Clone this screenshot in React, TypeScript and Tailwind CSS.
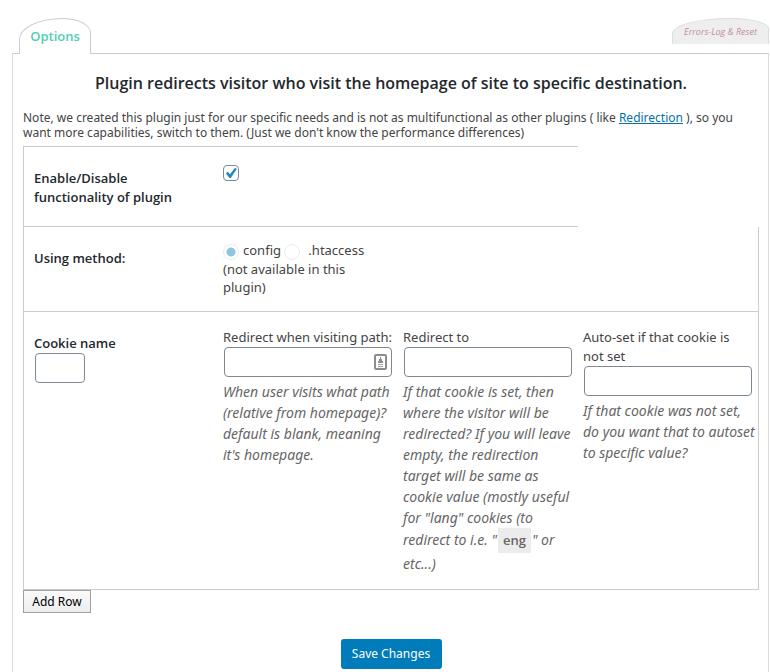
import { useState } from "react";
import type { ReactNode } from "react";

const fieldClass =
  "block h-[30px] rounded border border-[#7e8993] bg-white px-2 text-sm text-[#32373c] outline-none focus:border-[#007cba]";

const headClass =
  "border-b border-l border-[#ccc] px-[10px] pt-[22px] font-['Open_Sans',sans-serif] leading-[19px] font-semibold text-[#23282d]";

function Hint({ children }: { children: ReactNode }) {
  return <p className="mt-[4px] text-[14px] leading-[21px] text-[#666] italic">{children}</p>;
}

function AutofillIcon() {
  return (
    <svg className="pointer-events-none absolute top-[7px] right-[5px]" width="13" height="16" viewBox="0 0 13 16" aria-hidden="true">
      <rect x="1" y="1" width="11" height="14" rx="1" fill="#fff" stroke="#8c8c8c" strokeWidth="2" />
      <path d="M6 3h1v2h1v2h1v2H4V7h1V5h1z" fill="#8c8c8c" />
      <path d="M4 10h5v1H4zM4 12h5v1H4z" fill="#a5a5a5" />
    </svg>
  );
}

export default function App() {
  const [enabled, setEnabled] = useState(true);

  return (
    <div className="flex min-h-screen flex-col bg-white pt-[18px] pr-px pl-3 font-['Noto_Sans','Open_Sans',sans-serif] text-[13px] text-[#444]">
      <nav className="flex items-start justify-between pl-[7px] font-['Open_Sans',sans-serif]">
        <a
          href="#options"
          className="relative z-10 -mb-px flex h-9 w-[72px] items-center justify-center rounded-tl-[60%] rounded-tr-[40%] border border-b-0 border-[#ccc] bg-white text-[13px] font-semibold text-[#4fcfb4]"
        >
          Options
        </a>
        <a
          href="#errors-log"
          className="flex h-[26px] w-[97px] items-center justify-center rounded-tl-[60%] rounded-tr-[40%] border border-b-0 border-[#ddd] bg-[#eee] text-[9px] font-medium whitespace-nowrap text-[#c48d9b] italic"
        >
          Errors-Log &amp; Reset
        </a>
      </nav>

      <main className="flex-1 border border-b-0 border-[#ddd] border-t-[#ccc] pr-[9px] pb-[2px] pl-[10px]">
        <h1 className="mt-[17px] text-center font-['Open_Sans',sans-serif] text-[16px] leading-6 font-semibold text-[#23282d]">
          Plugin redirects visitor who visit the homepage of site to specific destination.
        </h1>
        <p className="mt-[15px] text-[12px] leading-[15px]">
          Note, we created this plugin just for our specific needs and is not as multifunctional as other plugins ( like{" "}
          <a href="#redirection" className="text-[#0073aa] underline">
            Redirection
          </a>{" "}
          ), so you want more capabilities, switch to them. (Just we don't know the performance differences)
        </p>

        <form onSubmit={(e) => e.preventDefault()}>
          <table className="mt-[6px] w-full table-fixed border-separate border-spacing-0 text-left">
            <colgroup>
              <col className="w-[190px]" />
              <col className="w-[180px]" />
              <col className="w-[185px]" />
              <col />
            </colgroup>
            <tbody>
              <tr className="h-[81px] align-top">
                <th className={`${headClass} border-t`}>
                  <label htmlFor="enabled">
                    Enable/Disable
                    <br />
                    functionality of plugin
                  </label>
                </th>
                <td colSpan={2} className="border-y border-[#ccc] px-[10px] pt-[18px]">
                  <span className="relative block size-4">
                    <input
                      id="enabled"
                      type="checkbox"
                      checked={enabled}
                      onChange={(e) => setEnabled(e.target.checked)}
                      className="block size-4 appearance-none rounded border border-[#7e8993] bg-white"
                    />
                    {enabled && (
                      <svg className="pointer-events-none absolute inset-0" width="16" height="16" viewBox="0 0 16 16" aria-hidden="true">
                        <path d="M2.8 8.2 4.8 6.8l2.2 2.4 5-6.4 1.8 1.2L7.8 13H6.4z" fill="#1e8cbe" />
                      </svg>
                    )}
                  </span>
                </td>
                <td />
              </tr>

              <tr className="h-[85px] align-top">
                <th className={headClass}>Using method:</th>
                <td className="border-b border-[#ccc] px-[10px] pt-[14px] leading-[18px]">
                  <input
                    id="method-config"
                    type="radio"
                    name="method"
                    defaultChecked
                    disabled
                    className="mr-1 inline-block size-4 appearance-none rounded-full border border-[#ececec] bg-white bg-[radial-gradient(circle,#8ec5df_4px,transparent_5px)] align-middle"
                  />
                  <label htmlFor="method-config">config</label>{" "}
                  <input
                    id="method-htaccess"
                    type="radio"
                    name="method"
                    disabled
                    className="mr-2 inline-block size-4 appearance-none rounded-full border border-[#ececec] bg-white align-middle"
                  />
                  <label htmlFor="method-htaccess">.htaccess (not available in this plugin)</label>
                </td>
                <td className="border-b border-[#ccc]" />
                <td className="border-r border-b border-[#ccc]" />
              </tr>

              <tr className="h-[278px] align-top">
                <th className={headClass}>
                  <label htmlFor="cookie">Cookie name</label>
                  <input id="cookie" type="text" className={`${fieldClass} ml-px w-[50px]`} />
                </th>
                <td className="border-b border-[#ccc] pt-[16px] pl-[10px] leading-[19px]">
                  <label htmlFor="path" className="whitespace-nowrap">
                    Redirect when visiting path:
                  </label>
                  <span className="relative ml-px block w-[168px]">
                    <input id="path" type="text" className={`${fieldClass} w-full`} />
                    <AutofillIcon />
                  </span>
                  <Hint>
                    When user visits what path (relative from homepage)? default is blank, meaning it's homepage.
                  </Hint>
                </td>
                <td className="border-b border-[#ccc] pt-[16px] pr-[5px] pl-[10px] leading-[19px]">
                  <label htmlFor="target">Redirect to</label>
                  <input id="target" type="text" className={`${fieldClass} ml-px w-[168px]`} />
                  <Hint>
                    If that cookie is set, then where the visitor will be redirected? If you will leave empty, the
                    redirection target will be same as cookie value (mostly useful for "lang" cookies (to redirect to
                    i.e. "<code className="mx-px inline-block bg-[#ececec] px-[5px] py-[2px] font-['Open_Sans'] text-[13px] font-semibold not-italic">eng</code>" or
                    etc...)
                  </Hint>
                </td>
                <td className="border-r border-b border-[#ccc] pt-[16px] pl-[5px] leading-[19px]">
                  <label htmlFor="autoset" className="block pr-4">
                    Auto-set if that cookie is not set
                  </label>
                  <input id="autoset" type="text" className={`${fieldClass} ml-px w-[168px]`} />
                  <Hint>If that cookie was not set, do you want that to autoset to specific value?</Hint>
                </td>
              </tr>
            </tbody>
          </table>

          <button
            type="button"
            className="block h-[23px] w-[68px] border border-[#a0a0a0] bg-linear-to-b from-[#fafafa] to-[#eee] text-[12px] leading-5 whitespace-nowrap text-black"
          >
            Add Row
          </button>

          <button
            type="submit"
            className="mx-auto mt-[26px] block h-[30px] w-[101px] rounded-[3px] bg-[#007cba] text-[12px] leading-7 whitespace-nowrap text-white"
          >
            Save Changes
          </button>
        </form>
      </main>
    </div>
  );
}
